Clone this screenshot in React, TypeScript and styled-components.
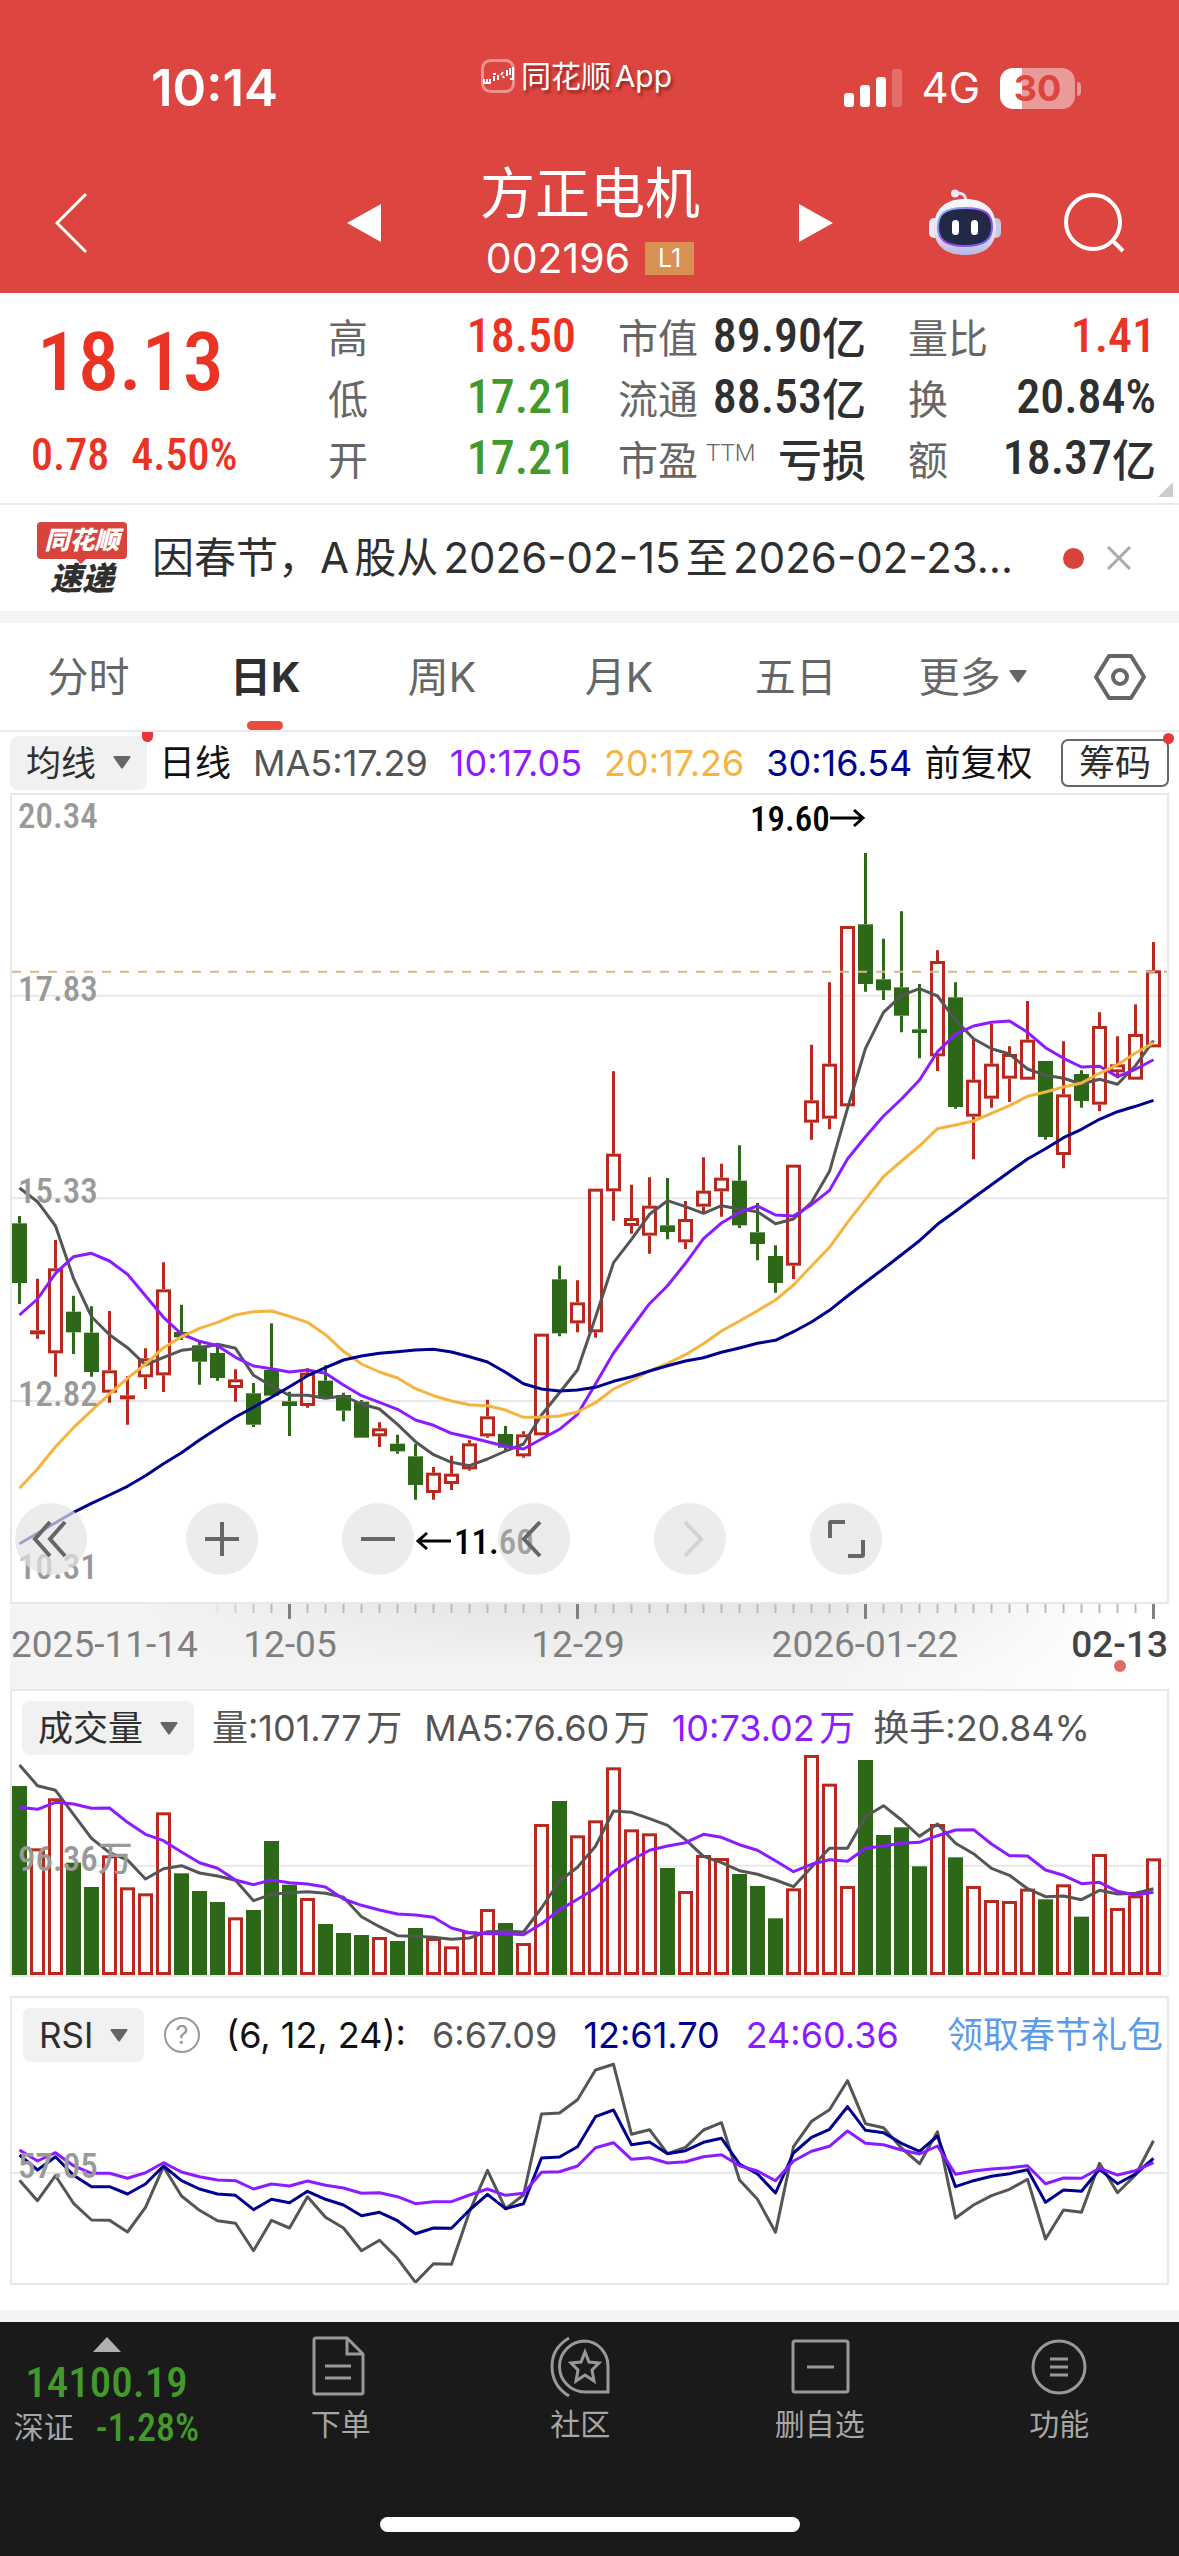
import React from "react";
import styled, { createGlobalStyle } from "styled-components";

const sans = `Inter, "Noto Sans CJK SC", sans-serif`;
const numeric = `"Roboto Condensed", Roboto, "Noto Sans CJK SC", sans-serif`;

const color = {
  brand: "#dc4540",
  up: "#ea3323",
  down: "#43992c",
  candleUp: "#b8281c",
  candleDown: "#2d6818",
  ink: "#2f2f2f",
  mute: "#666666",
  axis: "#999999",
  line: "#e8e8e8",
  gray: "#555555",
  purple: "#8c1cff",
  orange: "#f4b43f",
  navy: "#00008f",
};

const GlobalStyle = createGlobalStyle`
  * { box-sizing: border-box; }
  body { margin: 0; background: #ffffff; font-family: ${sans}; color: ${color.ink}; }
  button, select { font: inherit; color: inherit; background: none; border: 0; padding: 0; margin: 0; }
  svg { display: block; }
  h1, p, dl, dd, dt { margin: 0; font-weight: inherit; }
`;

/* ---------- data ---------- */

type Candle = [up: 0 | 1, high: number, top: number, bottom: number, low: number];

// Vertical positions are in thirds of a pixel.
const candles: Candle[] = [
  [0, 1308, 1330, 1509, 1572], [1, 1496, 1651, 1663, 1676], [1, 1380, 1465, 1720, 1790], [0, 1547, 1595, 1657, 1722],
  [0, 1579, 1658, 1776, 1790], [1, 1593, 1771, 1838, 1868], [1, 1788, 1846, 1858, 1934], [1, 1705, 1735, 1792, 1827],
  [1, 1447, 1528, 1786, 1836], [0, 1574, 1656, 1672, 1680], [0, 1682, 1696, 1745, 1814], [0, 1700, 1719, 1794, 1802],
  [1, 1768, 1798, 1824, 1865], [0, 1809, 1840, 1934, 1941], [0, 1630, 1770, 1847, 1847], [0, 1835, 1864, 1878, 1968],
  [1, 1765, 1778, 1878, 1883], [0, 1756, 1802, 1855, 1855], [0, 1838, 1845, 1892, 1924], [0, 1860, 1865, 1973, 1973],
  [1, 1927, 1945, 1969, 2001], [0, 1964, 1991, 2014, 2021], [0, 1992, 2029, 2115, 2159], [1, 2061, 2078, 2139, 2159],
  [1, 2027, 2081, 2112, 2130], [1, 1981, 1990, 2068, 2072], [1, 1859, 1909, 1969, 1973], [0, 1938, 1962, 2003, 2010],
  [1, 1954, 1963, 2029, 2033], [1, 1661, 1661, 1966, 1966], [0, 1457, 1498, 1660, 1669], [1, 1501, 1567, 1630, 1657],
  [1, 1226, 1226, 1657, 1673], [1, 874, 1121, 1234, 1322], [1, 1214, 1314, 1338, 1361], [1, 1192, 1277, 1367, 1421],
  [0, 1194, 1336, 1356, 1378], [1, 1263, 1317, 1387, 1407], [1, 1132, 1232, 1280, 1300], [1, 1151, 1193, 1234, 1310],
  [0, 1096, 1202, 1336, 1344], [0, 1269, 1357, 1392, 1441], [0, 1396, 1428, 1509, 1538], [1, 1154, 1154, 1457, 1497],
  [1, 794, 961, 1028, 1079], [1, 607, 851, 1016, 1048], [1, 438, 438, 979, 979], [0, 219, 433, 612, 635],
  [0, 476, 598, 631, 660], [0, 394, 622, 707, 757], [0, 612, 748, 759, 835], [1, 511, 543, 829, 873],
  [0, 607, 652, 981, 986], [1, 778, 899, 1010, 1138], [1, 732, 851, 956, 983], [1, 799, 822, 896, 966],
  [1, 663, 779, 899, 899], [0, 843, 843, 1071, 1079], [1, 784, 943, 1125, 1165], [0, 871, 882, 963, 983],
  [1, 697, 738, 974, 994], [1, 769, 853, 877, 895], [1, 673, 762, 899, 899], [1, 486, 571, 802, 802],
];

const ma5 = [1224, 1265, 1338, 1495, 1610, 1664, 1703, 1755, 1732, 1711, 1705, 1693, 1705, 1786, 1818, 1846, 1846, 1855, 1848, 1872, 1887, 1933, 1985, 2024, 2047, 2057, 2037, 2013, 1992, 1905, 1838, 1770, 1612, 1448, 1378, 1303, 1262, 1280, 1300, 1277, 1287, 1295, 1331, 1317, 1267, 1174, 985, 805, 697, 646, 626, 648, 720, 776, 806, 822, 867, 886, 895, 912, 898, 913, 857, 782];
const ma10 = [1605, 1557, 1480, 1430, 1420, 1443, 1483, 1547, 1612, 1662, 1684, 1697, 1732, 1758, 1766, 1776, 1770, 1780, 1815, 1847, 1867, 1888, 1920, 1936, 1960, 1972, 1985, 1999, 2007, 1977, 1948, 1903, 1812, 1719, 1644, 1571, 1517, 1450, 1376, 1329, 1297, 1278, 1305, 1308, 1274, 1231, 1137, 1070, 1008, 957, 900, 815, 763, 738, 727, 723, 757, 803, 835, 861, 859, 890, 868, 839];
const ma20 = [2125, 2067, 2000, 1943, 1892, 1842, 1795, 1753, 1703, 1670, 1645, 1627, 1605, 1595, 1593, 1609, 1627, 1664, 1714, 1752, 1776, 1794, 1826, 1847, 1863, 1874, 1877, 1890, 1912, 1912, 1908, 1896, 1868, 1827, 1802, 1773, 1750, 1724, 1691, 1653, 1623, 1592, 1560, 1515, 1458, 1402, 1327, 1258, 1190, 1143, 1098, 1046, 1035, 1023, 1000, 977, 949, 936, 921, 909, 880, 854, 819, 788];
const ma30 = [2291, 2260, 2228, 2197, 2170, 2145, 2119, 2087, 2051, 2018, 1980, 1945, 1911, 1882, 1852, 1820, 1787, 1763, 1740, 1728, 1720, 1715, 1710, 1708, 1716, 1730, 1746, 1777, 1811, 1827, 1833, 1830, 1822, 1804, 1790, 1773, 1757, 1743, 1733, 1717, 1704, 1690, 1681, 1655, 1626, 1591, 1548, 1507, 1466, 1424, 1382, 1333, 1294, 1253, 1214, 1175, 1137, 1106, 1073, 1048, 1018, 995, 979, 961];

const volume = [318, 505, 355, 548, 621, 526, 622, 640, 397, 580, 633, 666, 712, 690, 483, 614, 654, 732, 759, 765, 771, 783, 744, 774, 799, 754, 687, 729, 789, 432, 363, 466, 421, 262, 448, 460, 564, 633, 525, 534, 582, 618, 715, 625, 225, 311, 618, 240, 465, 442, 559, 432, 532, 618, 660, 663, 626, 658, 613, 710, 522, 684, 646, 535];
const vol5 = [255, 317, 331, 403, 475, 518, 540, 597, 566, 557, 579, 588, 601, 662, 643, 638, 635, 640, 652, 710, 740, 767, 769, 772, 778, 774, 755, 753, 756, 684, 603, 562, 499, 393, 397, 416, 436, 479, 529, 548, 572, 583, 600, 620, 562, 505, 505, 410, 377, 420, 469, 432, 490, 521, 565, 586, 626, 650, 648, 659, 631, 642, 640, 626];
const vol10 = [382, 388, 367, 372, 385, 384, 427, 463, 482, 516, 548, 565, 600, 614, 600, 608, 612, 621, 657, 676, 690, 702, 705, 712, 744, 758, 761, 761, 764, 731, 690, 658, 625, 575, 540, 511, 498, 488, 463, 472, 494, 511, 542, 575, 553, 539, 544, 505, 498, 490, 487, 467, 450, 449, 492, 527, 528, 570, 586, 611, 607, 634, 645, 637];

const rsi6 = [571, 632, 557, 640, 690, 691, 726, 652, 530, 618, 661, 692, 700, 782, 691, 714, 620, 682, 714, 782, 751, 805, 877, 821, 823, 665, 541, 656, 615, 372, 369, 329, 240, 223, 433, 419, 491, 472, 420, 398, 570, 628, 727, 470, 394, 359, 272, 401, 413, 474, 521, 425, 684, 645, 617, 598, 568, 747, 660, 667, 520, 608, 555, 452];
const rsi12 = [495, 540, 500, 556, 590, 590, 612, 582, 528, 572, 597, 612, 616, 659, 628, 638, 604, 628, 645, 677, 667, 692, 731, 714, 715, 660, 613, 656, 641, 504, 501, 470, 380, 360, 464, 456, 491, 482, 457, 445, 522, 552, 609, 489, 442, 418, 350, 421, 428, 460, 484, 438, 590, 572, 559, 551, 539, 637, 600, 604, 538, 581, 552, 505];
const rsi24 = [480, 513, 488, 527, 550, 550, 565, 548, 518, 546, 560, 570, 572, 597, 582, 588, 573, 586, 594, 610, 608, 620, 641, 635, 635, 615, 597, 616, 610, 547, 545, 528, 473, 458, 508, 503, 519, 515, 500, 494, 527, 543, 572, 513, 484, 469, 423, 460, 464, 480, 492, 468, 553, 543, 537, 533, 527, 581, 564, 565, 535, 555, 542, 518];

const STEP = 18;
const colX = (i: number) => 7.5 + STEP * i;
const scaleFrom = (origin: number) => (v: number) => (v - origin) / 3;
const toPoints = (values: number[], y: (v: number) => number) =>
  values.map((v, i) => `${colX(i)},${y(v).toFixed(1)}`).join(" ");

/* ---------- header ---------- */

const Header = styled.header`
  background: ${color.brand};
  color: #ffffff;
  height: 293px;
  display: flex;
  flex-direction: column;
`;

const StatusBar = styled.div`
  display: grid;
  grid-template-columns: 1fr auto 1fr;
  align-items: center;
  height: 110px;
  margin-top: 33px;
  padding: 0 104px 0 78px;
`;

const Clock = styled.time`
  padding-left: 73px;
  font-size: 51px;
  font-weight: 600;
  line-height: 60px;
`;

const BrandTag = styled.div`
  display: flex;
  align-items: center;
  gap: 6px;
  padding-bottom: 24px;
  font-size: 30px;
  line-height: 36px;
  text-autospace: normal;
  text-shadow: 2px 3px 3px rgba(80, 0, 0, 0.5);
`;

const StatusIcons = styled.div`
  display: flex;
  align-items: center;
  justify-content: flex-end;
  gap: 20px;
`;

const Network = styled.span`
  font-size: 42px;
  line-height: 48px;
`;

const Battery = styled.span`
  position: relative;
  width: 75px;
  height: 41px;
  border-radius: 13px;
  background: linear-gradient(90deg, #ffffff 30%, #ea9a98 30%);
  color: ${color.brand};
  font-size: 36px;
  font-weight: 700;
  line-height: 41px;
  text-align: center;

  &::after {
    content: "";
    position: absolute;
    left: 77px;
    top: 14px;
    width: 4px;
    height: 14px;
    border-radius: 0 4px 4px 0;
    background: #ea9a98;
  }
`;

const NavBar = styled.nav`
  display: grid;
  grid-template-columns: 1fr 486px 1fr;
  align-items: center;
  height: 150px;
  padding: 10px 54px 0 55px;
`;

const IconButton = styled.button<{ $start?: boolean }>`
  display: flex;
  align-items: center;
  justify-content: center;
  justify-self: ${(p) => (p.$start ? "start" : "auto")};
  cursor: pointer;
`;

const Switcher = styled.div`
  display: flex;
  align-items: center;
  justify-content: space-between;
`;

const Title = styled.div`
  display: flex;
  flex-direction: column;
  align-items: center;
  gap: 4px;
  padding-bottom: 6px;
`;

const StockName = styled.h1`
  font-size: 55px;
  font-weight: 400;
  line-height: 72px;
`;

const StockCode = styled.p`
  display: flex;
  align-items: center;
  gap: 15px;
  font-size: 41px;
  line-height: 50px;
`;

const Level = styled.span`
  width: 49px;
  height: 33px;
  background: #d89152;
  font-size: 25px;
  line-height: 33px;
  text-align: center;
`;

const NavActions = styled.div`
  display: flex;
  align-items: center;
  justify-content: flex-end;
  gap: 62px;
`;

/* ---------- quote ---------- */

const Quote = styled.section`
  position: relative;
  display: grid;
  grid-template-columns: 255px 1fr 1fr 1fr;
  column-gap: 42px;
  height: 212px;
  padding: 12px 23px 0 31px;
  border-bottom: 2px solid #ebebeb;
  font-family: ${numeric};
`;

const PriceBlock = styled.div`
  color: ${color.up};
`;

const Price = styled.p`
  padding-left: 6px;
  font-size: 82px;
  font-weight: 500;
  line-height: 114px;
`;

const Change = styled.p`
  display: flex;
  gap: 22px;
  font-size: 44px;
  font-weight: 500;
  line-height: 72px;
`;

const Facts = styled.dl`
  display: flex;
  flex-direction: column;
`;

const Fact = styled.div`
  display: flex;
  justify-content: space-between;
  align-items: center;
  height: 61px;
`;

const FactLabel = styled.dt`
  display: flex;
  align-items: center;
  gap: 8px;
  color: ${color.mute};
  font-size: 40px;
  white-space: nowrap;
`;

const Small = styled.small`
  font-family: Roboto, sans-serif;
  font-size: 24px;
  font-weight: 300;
  line-height: 24px;
  padding-bottom: 10px;
`;

const FactValue = styled.dd<{ $tone?: string }>`
  display: flex;
  align-items: center;
  color: ${(p) => p.$tone ?? color.ink};
  font-size: 48px;
  font-weight: 500;
  white-space: nowrap;
`;

const Unit = styled.span`
  font-size: 44px;
`;

const Corner = styled.span`
  position: absolute;
  right: 6px;
  bottom: 6px;
  border-left: 15px solid transparent;
  border-bottom: 15px solid #cccccc;
`;

/* ---------- notice ---------- */

const Notice = styled.section`
  display: flex;
  align-items: center;
  height: 118px;
  padding: 0 48px 0 37px;
  border-bottom: 12px solid #f4f4f4;
`;

const NoticeText = styled.p`
  flex: 1;
  margin-left: 25px;
  white-space: nowrap;
  font-size: 42px;
  line-height: 56px;
  text-autospace: normal;
`;

const Dot = styled.span`
  width: 21px;
  height: 21px;
  margin-right: 23px;
  border-radius: 50%;
  background: #d8443c;
`;

const ExpressBox = styled.div`
  width: 90px;
  font-weight: 900;
  font-style: italic;
`;

const ExpressTop = styled.div`
  position: relative;
  height: 37px;
  border-radius: 4px;
  background: #d8443c;
  color: #ffffff;
  font-size: 25px;
  line-height: 36px;
  text-align: center;

  &::after {
    content: "";
    position: absolute;
    left: 38px;
    top: 36px;
    border: 6px solid transparent;
    border-top-color: #d8443c;
  }
`;

const ExpressBottom = styled.div`
  height: 36px;
  font-size: 32px;
  line-height: 40px;
  text-align: center;
`;

/* ---------- tabs ---------- */

const Tabs = styled.div`
  display: flex;
  height: 109px;
  border-bottom: 2px solid #ebebeb;
`;

const Tab = styled.button<{ $active?: boolean; $narrow?: boolean }>`
  position: relative;
  flex: ${(p) => (p.$narrow ? 2 : 3)} 1 0;
  display: flex;
  align-items: center;
  justify-content: center;
  gap: 8px;
  color: ${(p) => (p.$active ? color.ink : color.mute)};
  font-size: 41px;
  font-weight: ${(p) => (p.$active ? 700 : 400)};
  line-height: 60px;
  cursor: pointer;

  &::after {
    content: "";
    display: ${(p) => (p.$active ? "block" : "none")};
    position: absolute;
    bottom: 0;
    left: calc(50% - 18px);
    width: 36px;
    height: 9px;
    border-radius: 5px;
    background: #e84d3d;
  }
`;

/* ---------- charts ---------- */

const Picker = styled.label<{ $badge?: boolean }>`
  position: relative;
  display: flex;
  align-items: center;
  height: 54px;
  padding: 0 16px;
  border-radius: 8px;
  background: #f1f1f1;

  select {
    appearance: none;
    padding-right: 34px;
    font-size: 35px;
    line-height: 48px;
  }

  &::before {
    content: "";
    display: ${(p) => (p.$badge ? "block" : "none")};
    position: absolute;
    right: -6px;
    top: -4px;
    width: 11px;
    height: 10px;
    border-radius: 0 0 6px 6px;
    background: #e8373a;
  }

  svg {
    position: absolute;
    right: 16px;
    pointer-events: none;
  }
`;

const Legend = styled.div`
  display: flex;
  align-items: center;
  height: 61px;
  padding: 0 10px;
`;

const Reading = styled.span<{ $tone?: string; $gap?: number }>`
  margin-left: ${(p) => p.$gap ?? 22}px;
  color: ${(p) => p.$tone ?? color.gray};
  font-size: 36px;
  line-height: 48px;
  white-space: nowrap;
  text-autospace: normal;
`;

const ChipButton = styled.button`
  position: relative;
  height: 48px;
  margin-left: auto;
  padding: 0 16px;
  border: 2px solid #666666;
  border-radius: 7px;
  font-size: 36px;
  line-height: 42px;

  &::before {
    content: "";
    position: absolute;
    right: -7px;
    top: -8px;
    width: 11px;
    height: 11px;
    border-radius: 50%;
    background: #e8373a;
  }
`;

const ChartArea = styled.main`
  padding: 0 10px 25px;
`;

const Panel = styled.section`
  position: relative;
  border: 2px solid ${color.line};

  & > svg {
    width: 100%;
    height: auto;
  }
`;

const IndicatorPanel = styled(Panel)`
  & + & {
    margin-top: 19px;
  }
`;

const IndicatorHeader = styled.div<{ $tall?: boolean }>`
  display: flex;
  align-items: center;
  height: 64px;
  padding: ${(p) => (p.$tall ? "10px 4px 0 11px" : "10px 10px 0 10px")};
`;

const Axis = styled.div`
  svg {
    width: 100%;
    height: auto;
  }
`;

const Controls = styled.div`
  position: absolute;
  left: 3px;
  bottom: 27px;
  display: flex;
  gap: 84px;
`;

const RoundButton = styled.button<{ $lead?: boolean }>`
  display: flex;
  align-items: center;
  justify-content: center;
  width: 72px;
  height: 72px;
  margin-right: ${(p) => (p.$lead ? 15 : 0)}px;
  border-radius: 50%;
  background: rgba(228, 228, 228, 0.7);
  cursor: pointer;
`;

const HelpButton = styled.button`
  width: 36px;
  height: 36px;
  margin-left: 20px;
  border: 2px solid #999999;
  border-radius: 50%;
  color: #999999;
  font-size: 26px;
  line-height: 32px;
`;

const GiftLink = styled.a`
  margin-left: auto;
  color: #5b9bea;
  font-size: 36px;
  line-height: 48px;
  text-decoration: none;
  white-space: nowrap;
`;

/* ---------- footer ---------- */

const Footer = styled.footer`
  height: 246px;
  border-top: 12px solid #f4f4f4;
  background: #1a1a1a;
  color: #a6a6a6;
  display: flex;
  flex-direction: column;
  align-items: center;
  justify-content: space-between;
  padding-bottom: 24px;
`;

const FooterRow = styled.div`
  align-self: stretch;
  display: flex;
`;

const IndexCard = styled.button`
  width: 221px;
  display: flex;
  flex-direction: column;
  align-items: center;
  padding: 15px 8px 0 0;
  font-family: ${numeric};
`;

const IndexValue = styled.span`
  margin-top: 6px;
  color: ${color.down};
  font-size: 43px;
  font-weight: 500;
  line-height: 48px;
`;

const IndexChange = styled.span`
  display: flex;
  align-items: center;
  gap: 22px;
  font-size: 30px;
  line-height: 44px;
`;

const Loss = styled.span`
  color: ${color.down};
  font-size: 38px;
  font-weight: 500;
`;

const FooterTab = styled.button`
  flex: 1;
  display: flex;
  flex-direction: column;
  align-items: center;
  gap: 4px;
  padding-top: 14px;
  font-size: 30px;
  line-height: 44px;
`;

const HomeBar = styled.div`
  width: 420px;
  height: 15px;
  border-radius: 8px;
  background: #ffffff;
`;

/* ---------- drawings ---------- */

const Caret = () => (
  <svg width={18} height={13} viewBox="0 0 18 13" aria-hidden>
    <path d="M1 0H17Q18 1 17 2L10 12Q9 13 8 12L1 2Q0 1 1 0Z" fill="#666666" />
  </svg>
);

const AppMark = () => (
  <svg width="34" height="34" viewBox="0 0 34 34" aria-hidden>
    <rect x="1.5" y="1.5" width="31" height="31" rx="8" fill="none" stroke="#eb928f" strokeWidth="3" />
    <path d="M3 20v4h6v-4M6 20v4" stroke="#ffffff" strokeWidth="2" fill="none" />
    <path d="M12 15h3M13 17v5M17 16v5M16 19h2M20 16l2-3M22 17l1 2M26 11v6M29 9v7M32 8v12h-3" stroke="#ffffff" strokeWidth="2" fill="none" />
  </svg>
);

const Signal = () => (
  <svg width="58" height="38" viewBox="0 0 58 38" aria-hidden>
    <rect x="0" y="24" width="10" height="14" rx="3" fill="#fff" />
    <rect x="16" y="16" width="10" height="22" rx="3" fill="#fff" />
    <rect x="32" y="8" width="10" height="30" rx="3" fill="#fff" />
    <rect x="48" y="0" width="10" height="38" rx="3" fill="#e36f6b" />
  </svg>
);

const Robot = () => (
  <svg width="72" height="68" viewBox="0 0 72 68" aria-hidden>
    <defs>
      <linearGradient id="shell" x1="0" y1="0" x2="0" y2="1">
        <stop offset="0" stopColor="#faf9fd" />
        <stop offset="0.6" stopColor="#e3e1f4" />
        <stop offset="1" stopColor="#b9b6e0" />
      </linearGradient>
      <linearGradient id="rim" x1="0" y1="0" x2="1" y2="1">
        <stop offset="0" stopColor="#7fd4ee" />
        <stop offset="0.5" stopColor="#a045e8" />
        <stop offset="1" stopColor="#5b6cf0" />
      </linearGradient>
    </defs>
    <path d="M26 5Q36 2 37 12" stroke="#e3dff3" strokeWidth="3" fill="none" />
    <circle cx="26" cy="4.5" r="4" fill="#ece9f8" />
    <rect x="0" y="29" width="12" height="20" rx="5" fill="#eceaf7" />
    <rect x="60" y="29" width="12" height="20" rx="5" fill="#c9c6ea" />
    <path d="M36 10C56 10 67 20 67 39C67 58 54 66 36 66C18 66 5 58 5 39C5 20 16 10 36 10Z" fill="url(#shell)" />
    <path d="M36 19C57 19 63 25 63 38C63 51 55 57 36 57C17 57 9 51 9 38C9 25 15 19 36 19Z" fill="#222947" stroke="url(#rim)" strokeWidth="2" />
    <rect x="23" y="31" width="7" height="15" rx="3.5" fill="#fff" />
    <rect x="42" y="31" width="7" height="15" rx="3.5" fill="#fff" />
  </svg>
);

const ExpressMark = () => (
  <ExpressBox>
    <ExpressTop>同花顺</ExpressTop>
    <ExpressBottom>速递</ExpressBottom>
  </ExpressBox>
);

/* ---------- chart drawings ---------- */

const AxisText = styled.text<{ $tone?: string }>`
  font-family: ${numeric};
  font-size: 35px;
  font-weight: 500;
  fill: ${(p) => p.$tone ?? color.axis};
`;

const DateText = styled.text<{ $current?: boolean }>`
  font-family: Roboto, sans-serif;
  font-size: 37px;
  font-weight: ${(p) => (p.$current ? 500 : 400)};
  fill: ${(p) => (p.$current ? "#444444" : "#808080")};
`;

const Line = ({ values, y, stroke }: { values: number[]; y: (v: number) => number; stroke: string }) => (
  <polyline points={toPoints(values, y)} fill="none" stroke={stroke} strokeWidth={3} strokeLinejoin="round" />
);

const PriceChart = () => {
  const y = scaleFrom(45);
  return (
    <svg viewBox="0 0 1155 807" role="img" aria-label="日K线图">
      {[647, 1255, 1863].map((v) => (
        <line key={v} x1={0} x2={1155} y1={y(v)} y2={y(v)} stroke={color.line} strokeWidth={2} />
      ))}
      {candles.map(([up, high, top, bottom, low], i) => {
        const tint = up ? color.candleUp : color.candleDown;
        const x = colX(i);
        return (
          <g key={i} stroke={tint} strokeWidth={3}>
            <path d={`M${x} ${y(high)}V${y(top)}M${x} ${y(bottom)}V${y(low)}`} />
            {up ? (
              <rect x={x - 6} y={y(top) + 1.5} width={12} height={Math.max(y(bottom) - y(top) - 3, 1)} fill="none" />
            ) : (
              <rect x={x - 7.5} y={y(top)} width={15} height={y(bottom) - y(top)} fill={tint} stroke="none" />
            )}
          </g>
        );
      })}
      <line x1={0} x2={1155} y1={y(575)} y2={y(575)} stroke="#d3b888" strokeWidth={2} strokeDasharray="9 9" />
      <Line values={ma5} y={y} stroke={color.gray} />
      <Line values={ma10} y={y} stroke={color.purple} />
      <Line values={ma20} y={y} stroke={color.orange} />
      <Line values={ma30} y={y} stroke={color.navy} />
      <AxisText x={6} y={33}>20.34</AxisText>
      <AxisText x={6} y={206}>17.83</AxisText>
      <AxisText x={6} y={408}>15.33</AxisText>
      <AxisText x={6} y={611}>12.82</AxisText>
      <AxisText x={6} y={784}>10.31</AxisText>
      <AxisText x={738} y={36} $tone="#000000">19.60</AxisText>
      <path d="M818 23H850M842 15L851 23L842 31" fill="none" stroke="#000" strokeWidth={3} />
      <AxisText x={442} y={759} $tone="#000000">11.60</AxisText>
      <path d="M439 746H407M415 738L406 746L415 754" fill="none" stroke="#000" strokeWidth={3} />
    </svg>
  );
};

const DateAxis = () => (
  <svg viewBox="0 0 1159 85" role="img" aria-label="日期">
    <defs>
      <linearGradient id="shade" x1="0" y1="0" x2="0" y2="1">
        <stop offset="0" stopColor="#e6e6e6" />
        <stop offset="0.8" stopColor="#f4f4f4" />
      </linearGradient>
      <linearGradient id="cover" x1="0" y1="0" x2="1" y2="0">
        <stop offset="0.1" stopColor="#f4f4f4" />
        <stop offset="0.4" stopColor="#f4f4f4" stopOpacity="0" />
        <stop offset="0.7" stopColor="#ffffff" stopOpacity="0" />
        <stop offset="0.96" stopColor="#ffffff" />
      </linearGradient>
    </defs>
    <rect width="1159" height="85" fill="url(#shade)" />
    <rect width="1159" height="85" fill="url(#cover)" />
    {candles.map((_, i) => {
      if (i < 11) return null;
      const major = i % 16 === 15;
      return (
        <line
          key={i}
          x1={colX(i) + 2}
          x2={colX(i) + 2}
          y1={0}
          y2={major ? 15 : 9}
          stroke={major ? "#808080" : "#bbbbbb"}
          strokeWidth={major ? 3 : 2}
          opacity={major ? 1 : Math.min((i - 10) / 4, 1)}
        />
      );
    })}
    <DateText x={1} y={53}>2025-11-14</DateText>
    <DateText x={280} y={53} textAnchor="middle">12-05</DateText>
    <DateText x={568} y={53} textAnchor="middle">12-29</DateText>
    <DateText x={855} y={53} textAnchor="middle">2026-01-22</DateText>
    <DateText x={1158} y={53} textAnchor="end" $current>02-13</DateText>
    <circle cx={1110} cy={62} r={6} fill="#e06a67" />
  </svg>
);

const VolumeChart = () => {
  const y = scaleFrom(225);
  return (
    <svg viewBox="0 0 1155 220" role="img" aria-label="成交量">
      <line x1={0} x2={1155} y1={y(557)} y2={y(557)} stroke={color.line} strokeWidth={2} />
      {volume.map((v, i) =>
        candles[i][0] ? (
          <rect key={i} x={colX(i) - 6} y={y(v) + 1.5} width={12} height={217 - y(v)} fill="#fff" stroke={color.candleUp} strokeWidth={3} />
        ) : (
          <rect key={i} x={colX(i) - 7.5} y={y(v)} width={15} height={220 - y(v)} fill={color.candleDown} />
        )
      )}
      <Line values={vol5} y={y} stroke={color.gray} />
      <Line values={vol10} y={y} stroke={color.purple} />
      <AxisText x={6} y={116}>96.36万</AxisText>
    </svg>
  );
};

const RsiChart = () => {
  const y = scaleFrom(216);
  return (
    <svg viewBox="0 0 1155 221" role="img" aria-label="RSI">
      <line x1={0} x2={1155} y1={y(549)} y2={y(549)} stroke={color.line} strokeWidth={2} />
      <Line values={rsi6} y={y} stroke={color.gray} />
      <Line values={rsi12} y={y} stroke={color.navy} />
      <Line values={rsi24} y={y} stroke={color.purple} />
      <AxisText x={6} y={116}>57.05</AxisText>
    </svg>
  );
};

const Glyph = ({ d, stroke = "#666666" }: { d: string; stroke?: string }) => (
  <svg width={44} height={44} viewBox="0 0 44 44" fill="none" stroke={stroke} strokeWidth="4" aria-hidden>
    <path d={d} />
  </svg>
);

const controls = [
  { label: "最早", d: "M21 5L6 22L21 39M36 5L21 22L36 39" },
  { label: "放大", d: "M22 5V39M5 22H39" },
  { label: "缩小", d: "M5 22H39" },
  { label: "向左", d: "M28 5L12 22L28 39" },
  { label: "向右", d: "M17 5L33 22L17 39", stroke: "#d2d2d2" },
  { label: "全屏", d: "M6 21V6Q6 5 7 5H21M39 23V38Q39 39 38 39H24" },
];

const footerTabs = [
  {
    label: "下单",
    icon: (
      <>
        <path d="M5 2H36L52 18V56Q52 58 50 58H5Q3 58 3 56V4Q3 2 5 2ZM36 2V18H52" />
        <path d="M14 30H40M14 42H40" />
      </>
    ),
  },
  {
    label: "社区",
    icon: (
      <>
        <path d="M19 2Q2 12 2 30Q2 50 19 60" />
        <path d="M35 5A25 25 0 1 0 35 56H58V30A24 25 0 0 0 35 5Z" />
        <path d="M35 16L39 26L49 27L42 34L44 45L35 39L26 45L28 34L21 27L31 26Z" />
      </>
    ),
  },
  {
    label: "删自选",
    icon: (
      <>
        <rect x="3" y="5" width="55" height="51" rx="2" />
        <path d="M17 31H44" />
      </>
    ),
  },
  {
    label: "功能",
    icon: (
      <>
        <circle cx="30" cy="31" r="26" />
        <path d="M21 23H39M21 31H39M21 39H39" />
      </>
    ),
  },
];

type QuoteFact = { label: string; note?: string; value?: string; unit?: string; tone?: string };

const quoteColumns: QuoteFact[][] = [
  [
    { label: "高", value: "18.50", tone: color.up },
    { label: "低", value: "17.21", tone: color.down },
    { label: "开", value: "17.21", tone: color.down },
  ],
  [
    { label: "市值", value: "89.90", unit: "亿" },
    { label: "流通", value: "88.53", unit: "亿" },
    { label: "市盈", note: "TTM", unit: "亏损" },
  ],
  [
    { label: "量比", value: "1.41", tone: color.up },
    { label: "换", value: "20.84%" },
    { label: "额", value: "18.37", unit: "亿" },
  ],
];

export default function App() {
  return (
    <>
      <GlobalStyle />
      <Header>
        <StatusBar>
          <Clock>10:14</Clock>
          <BrandTag>
            <AppMark />
            同花顺App
          </BrandTag>
          <StatusIcons>
            <Signal />
            <Network>4G</Network>
            <Battery>30</Battery>
          </StatusIcons>
        </StatusBar>
        <NavBar>
          <IconButton aria-label="返回" $start>
            <svg width="34" height="62" viewBox="0 0 34 62" fill="none" stroke="#fff" strokeWidth="3">
              <path d="M31 2L2 31L31 60" />
            </svg>
          </IconButton>
          <Switcher>
            <IconButton aria-label="上一只">
              <svg width="34" height="38" viewBox="0 0 34 38"><path d="M34 0V38L0 19Z" fill="#fff" /></svg>
            </IconButton>
            <Title>
              <StockName>方正电机</StockName>
              <StockCode>
                002196 <Level>L1</Level>
              </StockCode>
            </Title>
            <IconButton aria-label="下一只">
              <svg width="34" height="38" viewBox="0 0 34 38"><path d="M0 0V38L34 19Z" fill="#fff" /></svg>
            </IconButton>
          </Switcher>
          <NavActions>
            <IconButton aria-label="智能助手"><Robot /></IconButton>
            <IconButton aria-label="搜索">
              <svg width="62" height="60" viewBox="0 0 62 60" fill="none" stroke="#fff" strokeWidth="4">
                <circle cx="30" cy="29" r="27" />
                <path d="M49 47L60 58" />
              </svg>
            </IconButton>
          </NavActions>
        </NavBar>
      </Header>

      <Quote>
        <PriceBlock>
          <Price>18.13</Price>
          <Change>
            <span>0.78</span>
            <span>4.50%</span>
          </Change>
        </PriceBlock>
        {quoteColumns.map((facts, c) => (
          <Facts key={c}>
            {facts.map((f) => (
              <Fact key={f.label}>
                <FactLabel>
                  {f.label}
                  {f.note && <Small>{f.note}</Small>}
                </FactLabel>
                <FactValue $tone={f.tone}>
                  {f.value}
                  {f.unit && <Unit>{f.unit}</Unit>}
                </FactValue>
              </Fact>
            ))}
          </Facts>
        ))}
        <Corner />
      </Quote>

      <Notice>
        <ExpressMark />
        <NoticeText>因春节，A股从2026-02-15至2026-02-23…</NoticeText>
        <Dot />
        <IconButton aria-label="关闭">
          <svg width="24" height="24" viewBox="0 0 24 24" stroke="#aaaaaa" strokeWidth="3"><path d="M1 1L23 23M23 1L1 23" /></svg>
        </IconButton>
      </Notice>

      <Tabs>
        <Tab>分时</Tab>
        <Tab $active>日K</Tab>
        <Tab>周K</Tab>
        <Tab>月K</Tab>
        <Tab>五日</Tab>
        <Tab>
          更多
          <Caret />
        </Tab>
        <Tab $narrow aria-label="设置">
          <svg width="52" height="46" viewBox="0 0 52 46" fill="none" stroke="#666" strokeWidth="4">
            <path d="M15 2H37L50 23L37 44H15L2 23Z" strokeLinejoin="round" />
            <circle cx="26" cy="23" r="7" />
          </svg>
        </Tab>
      </Tabs>

      <Legend>
        <Picker $badge>
          <select aria-label="主图指标"><option>均线</option></select>
          <Caret />
        </Picker>
        <Reading $tone="#111111" $gap={12}>日线</Reading>
        <Reading>MA5:17.29</Reading>
        <Reading $tone={color.purple}>10:17.05</Reading>
        <Reading $tone={color.orange}>20:17.26</Reading>
        <Reading $tone={color.navy}>30:16.54</Reading>
        <Reading $tone="#111111" $gap={12}>前复权</Reading>
        <ChipButton>筹码</ChipButton>
      </Legend>

      <ChartArea>
        <Panel>
          <PriceChart />
          <Controls>
            {controls.map((c, i) => (
              <RoundButton key={c.label} aria-label={c.label} $lead={i === 0}>
                <Glyph d={c.d} stroke={c.stroke} />
              </RoundButton>
            ))}
          </Controls>
        </Panel>
        <Axis><DateAxis /></Axis>

        <IndicatorPanel>
          <IndicatorHeader>
            <Picker>
              <select aria-label="副图指标一"><option>成交量</option></select>
              <Caret />
            </Picker>
            <Reading $gap={18}>量:101.77万</Reading>
            <Reading>MA5:76.60万</Reading>
            <Reading $tone={color.purple}>10:73.02万</Reading>
            <Reading $gap={18}>换手:20.84%</Reading>
          </IndicatorHeader>
          <VolumeChart />
        </IndicatorPanel>

        <IndicatorPanel>
          <IndicatorHeader $tall>
            <Picker>
              <select aria-label="副图指标二"><option>RSI</option></select>
              <Caret />
            </Picker>
            <HelpButton aria-label="指标说明">?</HelpButton>
            <Reading $tone="#111111" $gap={26}>(6, 12, 24):</Reading>
            <Reading $gap={26}>6:67.09</Reading>
            <Reading $tone={color.navy} $gap={26}>12:61.70</Reading>
            <Reading $tone={color.purple} $gap={26}>24:60.36</Reading>
            <GiftLink href="#gift">领取春节礼包</GiftLink>
          </IndicatorHeader>
          <RsiChart />
        </IndicatorPanel>
      </ChartArea>

      <Footer>
        <FooterRow>
          <IndexCard>
            <svg width="28" height="15" viewBox="0 0 28 15"><path d="M14 0L28 15H0Z" fill="#b0b0b0" /></svg>
            <IndexValue>14100.19</IndexValue>
            <IndexChange>
              深证 <Loss>-1.28%</Loss>
            </IndexChange>
          </IndexCard>
          {footerTabs.map((t) => (
            <FooterTab key={t.label}>
              <svg width="60" height="62" viewBox="0 0 60 62" fill="none" stroke="#999999" strokeWidth="3">{t.icon}</svg>
              {t.label}
            </FooterTab>
          ))}
        </FooterRow>
        <HomeBar />
      </Footer>
    </>
  );
}
